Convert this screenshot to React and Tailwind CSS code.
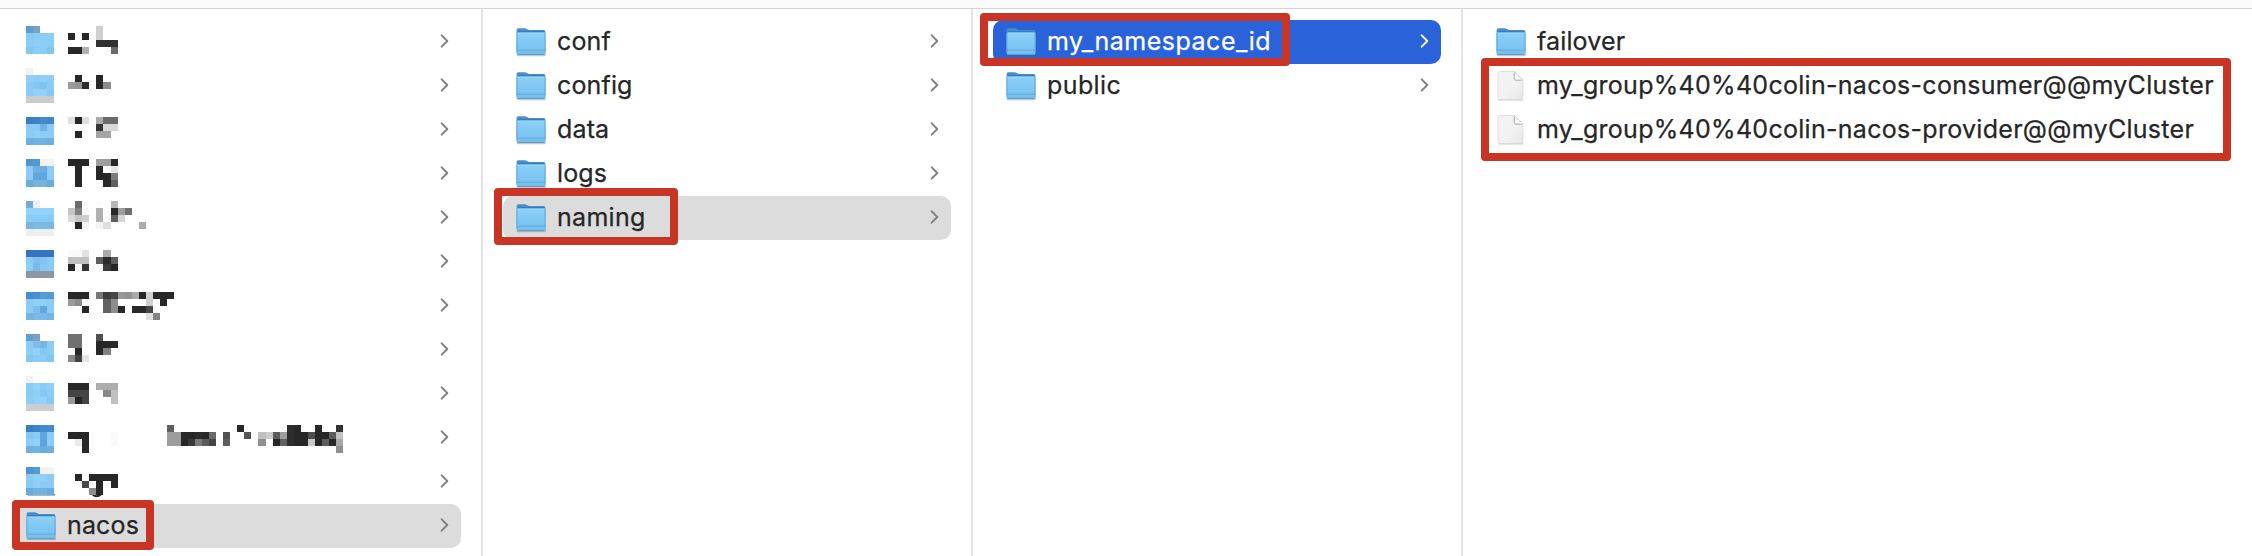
import React from "react";

const CELL_W = 7.045;
const CELL_H = 7;
const D = "#272727";

// Each censored entry: vertical offset inside its row, the icon cells (rows of
// four colours) and the label cells as [row, column, colours...] runs.
const L = "#8bcbf5";
const M = "#85c6f2";
const CENSORED = [
  {
    top: 6,
    icon: [["#5b9dd0", "#7aa2c8"], ["#87cbf4", "#89ccf5", "#89cdf6", "#8bcff7"], ["#89cdf6", "#8ccff8", "#8bcdf7", "#8acdf7"], ["#83c6f0", "#8bcdf6", "#8bcdf6", "#80c4f2"]],
    label: [[0, 10, "#d0d0d0"], [1, 6, D, "", D, "", "#d0d0d0"], [2, 10, "#303030", "#303030", "#303030"], [3, 6, D, D, "#b0b0b0"], [3, 12, "#6b6b6b"]],
  },
  {
    top: 4,
    icon: [["#f4f1f1", "#fdfdfd"], ["#8fcff8", "#8dcef8", "#8fcff8", "#8dcef8"], ["#87cbf6", "#84c5f1", "#81c2ef", "#8bcbf6"], ["#87cbf6", "#90d2fa", "#90d2fa", "#87c8f4"], ["#cccccc", "#cccccc", "#cccccc", "#cccccc"]],
    label: [[1, 7, D], [1, 10, D], [2, 6, "#9b9b9b", "#939393", "#2c2c2c"], [2, 10, D, "#8c8c8c"]],
  },
  {
    top: 9,
    icon: [["#3a7fc3", "#3d82c5", "#428ac9", "#4088c9"], ["#8bcbf5", "#8acbf6", "#75b0e2", L], [L, "#8fcff8", "#8dcef8", L], ["#6bb0e0", "#70b3e1", "#70b3e1", "#6bb0e0"]],
    label: [[0, 6, "#dedede", D, "#dedede"], [0, 10, "#a9a9a9", "#6a6a6a", "#6a6a6a"], [1, 10, "#353535", "#d8d8d8", "#d8d8d8"], [2, 7, D], [2, 10, "#a4a4a4", "#a4a4a4"]],
  },
  {
    top: 7,
    icon: [["#4f96cf", "#5399d0", "#f1f1f1", "#f3f3f3"], [L, "#6caee0", "#6aacdf", L], [L, "#60a7df", "#5ea6e0", L], ["#68aedd", "#76b3db", "#76b3db", "#68aedd"]],
    label: [[0, 6, D, D, D, "", "#9e9e9e", "#9e9e9e", D], [1, 7, D], [1, 10, D, "#ffffff", "#e5e5e5"], [2, 7, D], [2, 10, D, D, "#7d7d7d"], [3, 7, D], [3, 11, D, "#606060"]],
  },
  {
    top: 5,
    icon: [["#74aad6", "#efefef"], ["#93d3f9", "#93d3f9", "#93d3f9", "#93d3f9"], ["#87ccf7", "#87ccf7", "#87ccf7", "#87ccf7"], ["#73b7e2", "#7bb9e1", "#7bb9e1", "#76bae4"], ["#eeeeee", "#eeeeee", "#eeeeee", "#eeeeee"]],
    label: [[0, 7, "#6b6b6b"], [0, 10, "#fcfcfc", "", "#b5b5b5"], [1, 6, "#c5c5c5", "#808080", "#f9f9f9", "", "#b0b0b0", "#fbfbfb", D, "#9c9c9c", "#6f6f6f"], [2, 6, "#d9d9d9", "#c5c5c5", "#cfcfcf", "", "#b0b0b0", "#fbfbfb", "#606060", "#d5d5d5"], [3, 7, D, "#f3f3f3", "", "#f4f4f4", "#dfdfdf"], [3, 16, "#ababab"]],
  },
  {
    top: 10,
    icon: [["#3573c1", "#3775c3", "#3775c3", "#3775c3"], [L, "#80bfec", "#85c4f0", L], ["#88cff9", "#7db8ea", "#87c8f4", "#8acbf6"], ["#8e979f", "#8e979f", "#8e979f", "#8e979f"]],
    label: [[0, 6, "#f9f9f9", "#f9f9f9", "#e2e2e2"], [0, 11, "#aaaaaa"], [1, 6, "#c0c0c0", "#c0c0c0", "#c0c0c0", "", "#5e5e5e", "#2b2b2b", "#5e5e5e"], [2, 6, D, "#fafafa", "#333333"], [2, 11, "#3a3a3a", D]],
  },
  {
    top: 8,
    icon: [["#428ecf", "#4791cf", "#559bd3", "#559bd3"], [L, "#90cff7", "#90cff7", L], [L, "#80bdee", "#63a6dc", L], ["#70b7e6", "#78bae5", "#78bae5", "#70b7e6"]],
    label: [[0, 6, D, D, D, "", "#777777", "#3f3f3f", "#454545", "#979797", "#939393", "#aaaaaa", D, "#cfcfcf", D, D, D], [1, 6, "#9b9b9b", "#8c8c8c", "#f6f6f6"], [1, 11, "#626262", "#8d8d8d"], [1, 17, "#cfcfcf", "", D], [2, 8, D], [2, 11, "#626262", "#8d8d8d", D, "", D, D, "#474747"], [3, 17, "#dfdfdf", "#848484"]],
  },
  {
    top: 6,
    icon: [["#5f9fd1", "#7b9fc7"], [L, "#80bbe9", "#78b5e5", L], ["#8acdf8", "#92d1f9", M, L], ["#82c7f4", "#89ccf6", "#89ccf6", "#82c7f4"]],
    label: [[0, 6, "#707070", "#707070"], [0, 10, "#505050"], [1, 6, "#707070", "#707070"], [1, 10, D, D, D], [2, 7, D], [2, 10, D, "#808080"], [3, 6, "#888888", "#444444", "#e5e5e5"]],
  },
  {
    top: 4,
    icon: [["#f3f2f2", "#fdfdfd"], ["#88ccf6", "#92d1f9", "#8acbf6", "#8fcff8"], ["#88ccf6", "#8fcff8", "#87c9f5", "#8bcbf6"], ["#8acdf7", "#90d2fa", "#93d3fa", "#87c8f4"], ["#cfcccf", "#cfcccf", "#cfcccf", "#cfcccf"]],
    label: [[1, 6, D, D, D, "", "#adadad", "#adadad", "#adadad"], [2, 6, "#444444", "#444444", "#444444"], [2, 11, "#888888", "#c1c1c1"], [3, 6, "#999999", "#252525", "#454545"], [3, 12, "#c1c1c1"]],
  },
  {
    top: 9,
    icon: [["#397dc2", "#3f84c6", "#438bca", "#438bca"], ["#84c7f4", "#8acbf6", "#65a5dd", L], [L, "#92d1f9", "#5fa3df", L], ["#6bb0e0", "#70b3e1", "#68addf", "#6bb0e0"]],
    label: [
      [0, 20, "#606060"], [0, 30, D], [0, 37, "#2d2d2d", D], [0, 41, D], [0, 44, "#333333"],
      [1, 6, D, D, D], [1, 12, "#fafafa"], [1, 20, "#9d9d9d", "#9d9d9d", D, D, "#2b2b2b", D, "#696969", "", "#505050"], [1, 31, "#555555"], [1, 33, "#c0c0c0", "#cdcdcd", "#5c5c5c", "#9d9d9d", "#2d2d2d", D, D, "#4e4e4e", D, D, "#5c5c5c", "#c3c3c3"],
      [2, 7, "#ebebeb", D], [2, 12, "#fafafa"], [2, 20, "#9d9d9d", "#9d9d9d", D, "#3a3a3a", "#7a7a7a", "#5b5b5b", "#444444", "", "#5f5f5f"], [2, 33, "#909090", "", D, "#606060", "#2d2d2d", D, D, "#c8c8c8", D, "#5d5d5d", D, "#a8a8a8"],
      [3, 8, D], [3, 44, "#909090"],
    ],
  },
  {
    top: 7,
    icon: [["#4c94cd", "#569acd", "#f1f1f1", "#f3f3f3"], [L, "#8fd0f8", "#8fd0f8", L], ["#87caf6", "#90cff7", "#8bcbf5", L], ["#66acdd", "#70b3dc", "#70b3dc", "#66acdd"]],
    label: [[1, 7, D, "", D, D, D, D], [2, 8, "#484848", "", D, "", D], [3, 9, "#8c8c8c", D]],
    residue: true,
  },
];

function CensoredRow({ top, icon, label, residue }) {
  const cells = [];
  icon.forEach((line, r) => line.forEach((fill, c) => cells.push({ r, c, fill })));
  label.forEach(([r, start, ...fills]) =>
    fills.forEach((fill, k) => fill && cells.push({ r, c: start + k, fill }))
  );
  return (
    <svg className="h-11 w-[330px] shrink-0" viewBox="0 0 330 44" shapeRendering="crispEdges">
      {residue && (
        <g shapeRendering="auto" fill="none" strokeLinecap="round">
          <path d="M2 34.8H28.5" stroke="#5f7788" strokeWidth="1.4" />
          <path d="M66 33.5c2 3.6 7.5 3.400 9.500 0" stroke={D} strokeWidth="2" />
        </g>
      )}
      {cells.map(({ r, c, fill }) => (
        <rect key={r + "-" + c} x={c * CELL_W} y={top + r * CELL_H} width={CELL_W} height={CELL_H} fill={fill} />
      ))}
    </svg>
  );
}

function FolderIcon() {
  return (
    <svg className="h-11 w-[31px] shrink-0" viewBox="0 0 31 44">
      <defs>
        <linearGradient id="folderFront" x1="0" y1="0" x2="0" y2="1">
          <stop offset="0" stopColor="#8bd0f8" />
          <stop offset="1" stopColor="#74bfee" />
        </linearGradient>
      </defs>
      <path d="M1 33.500Q1 35.700 3 35.700H27.600Q29.600 35.700 29.600 33.500" fill="none" stroke="#51606b" strokeOpacity=".35" strokeWidth="1.300" />
      <path d="M.6 10.200Q.6 8.300 2.500 8.300H8.700C10.700 8.300 11.300 9.900 13.200 9.900H27.500Q29.400 9.900 29.400 11.800V31H.6Z" fill="#468fcc" />
      <path d="M2 11.500H28.500" stroke="#377db9" strokeWidth="1" />
      <path d="M.6 14Q.6 12.600 2 12.600H28Q29.400 12.600 29.400 14V32.900Q29.400 34.900 27.400 34.900H2.600Q.6 34.900 .6 32.900Z" fill="url(#folderFront)" />
      <path d="M1 13V33M29 13V33" stroke="#5ba5da" strokeWidth=".8" />
      <path d="M1.500 13.200H28.500" stroke="#a0dbfa" strokeWidth=".8" />
      <path d="M1 30.200H29" stroke="#5ca6d7" strokeWidth=".9" />
      <path d="M1.500 34.400H28.500" stroke="#5b9dca" strokeWidth="1" />
    </svg>
  );
}

function FileIcon() {
  return (
    <svg className="h-11 w-[31px] shrink-0" viewBox="0 0 31 44">
      <defs>
        <linearGradient id="filePage" x1="0" y1="0" x2="1" y2="1">
          <stop offset="0" stopColor="#f4f4f4" />
          <stop offset=".6" stopColor="#f1f1f1" />
          <stop offset="1" stopColor="#e7e7e7" />
        </linearGradient>
      </defs>
      <path d="M2.800 35.900H26.500" stroke="#000" strokeOpacity=".2" strokeWidth="1.200" strokeLinecap="round" />
      <path d="M4 7.500H18.200L27 16.200V33.500Q27 35.500 25 35.500H4Q2 35.500 2 33.500V9.500Q2 7.500 4 7.500Z" fill="url(#filePage)" stroke="#d5d5d5" strokeWidth=".7" />
      <path d="M18.200 7.500L27 16.200H20Q18.200 16.200 18.200 14.400Z" fill="#fdfdfd" stroke="#bdbdbd" strokeWidth=".7" />
      <path d="M18.300 9V14.300Q18.300 16.200 20.200 16.200H25" fill="none" stroke="#ababab" strokeWidth=".8" />
    </svg>
  );
}

function Chevron({ active }) {
  return (
    <svg className="mb-0.5 ml-auto h-[14px] w-[9px] shrink-0" viewBox="0 0 9 14" fill="none">
      <path d="M1.700 1.300L7.300 7L1.700 12.700" stroke={active ? "#ffffff" : "#808080"} strokeWidth="1.900" strokeLinecap="round" strokeLinejoin="round" />
    </svg>
  );
}

const TONES = {
  plain: "text-[#262626]",
  muted: "bg-[#dcdcdc] text-[#262626]",
  active: "bg-[#2962d9] text-white",
};

function Row({ name, tone = "plain", file, leaf, spacing = "tracking-[0.15px]", mark }) {
  return (
    <div className={"relative flex h-11 items-center rounded-[10px] pl-[13px] pr-3 " + TONES[tone]}>
      {file ? <FileIcon /> : <FolderIcon />}
      <span className={"mb-0.5 ml-[10px] whitespace-nowrap text-[25px] leading-[42px] [-webkit-text-stroke:0.25px_currentColor] " + spacing}>{name}</span>
      {!leaf && <Chevron active={tone === "active"} />}
      {mark && <div className={"absolute rounded-[4px] border-8 border-[#c93524] " + mark} />}
    </div>
  );
}

function Column({ className = "", children }) {
  return <div className={"flex shrink-0 flex-col border-r-2 border-[#e4e4e4] pt-[11px] " + className}>{children}</div>;
}

export default function App() {
  return (
    <div className="flex h-[556px] w-[2252px] flex-col overflow-hidden bg-white font-['Inter',sans-serif]">
      <div className="h-[9px] shrink-0 border-b border-[#d3d3d3] bg-[#fafafa]" />
      <div className="flex min-h-0 flex-1">
        <Column className="w-[483px] pl-[13px] pr-5">
          {CENSORED.map((entry, i) => (
            <div key={i} className="flex h-11 shrink-0 items-center pl-[13px] pr-3">
              <CensoredRow {...entry} />
              <Chevron />
            </div>
          ))}
          <Row name="nacos" tone="muted" mark="-left-px top-[-4px] h-[50px] w-[142px]" />
        </Column>
        <Column className="w-[490px] px-5">
          <Row name="conf" />
          <Row name="config" />
          <Row name="data" />
          <Row name="logs" />
          <Row name="naming" tone="muted" spacing="tracking-[0.3px]" mark="left-[-9px] top-[-8px] h-[57px] w-[184px]" />
        </Column>
        <Column className="w-[490px] px-5">
          <Row name="my_namespace_id" tone="active" spacing="tracking-[0.52px]" mark="left-[-13px] top-[-7px] h-[53px] w-[310px]" />
          <Row name="public" spacing="tracking-[0.4px]" />
        </Column>
        <div className="flex flex-1 flex-col pl-5 pt-[11px]">
          <Row name="failover" leaf />
          <div className="relative">
            <Row name="my_group%40%40colin-nacos-consumer@@myCluster" file leaf spacing="tracking-[0.29px]" />
            <Row name="my_group%40%40colin-nacos-provider@@myCluster" file leaf spacing="tracking-[0.29px]" />
            <div className="absolute left-[-2px] top-[-6px] h-[103px] w-[750px] rounded-[4px] border-8 border-[#c93524]" />
          </div>
        </div>
      </div>
    </div>
  );
}
